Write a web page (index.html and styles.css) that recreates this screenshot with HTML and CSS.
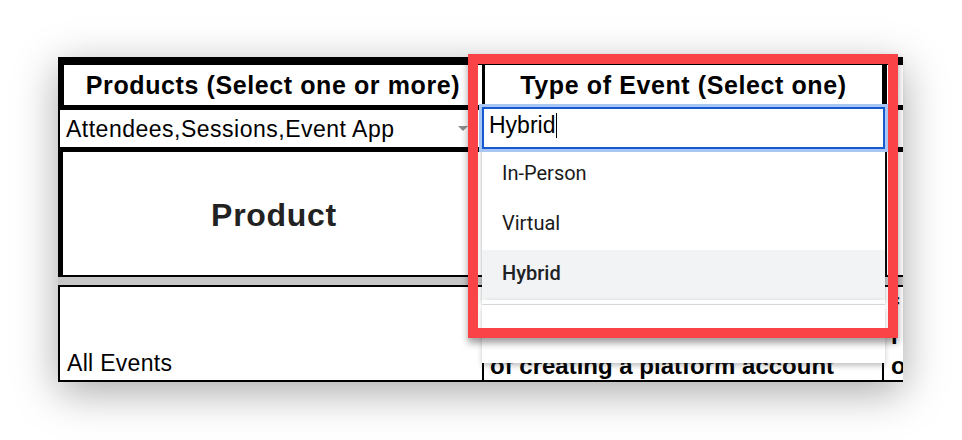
FILE: index.html
```html
<!DOCTYPE html>
<html lang="en">
<head>
<meta charset="utf-8">
<title>Sheet dropdown</title>
<link rel="stylesheet" href="styles.css">
</head>
<body>
<div class="stage">
  <div class="sheet">
    <div class="row row-head">
      <div class="cell c1 head">Products (Select one or more)</div>
      <div class="cell c2 head">Type of Event (Select one)</div>
      <div class="cell c3"></div>
    </div>
    <div class="row row-select">
      <div class="cell c1 select-cell">
        <span class="select-text">Attendees,Sessions,Event App</span>
        <span class="arrow"></span>
      </div>
      <div class="cell c2"></div>
      <div class="cell c3"></div>
    </div>
    <div class="row row-title">
      <div class="cell c1 title">Product</div>
      <div class="cell c2"></div>
      <div class="cell c3"></div>
    </div>
    <div class="freeze-bar"></div>
    <div class="row row-body">
      <div class="cell c1 body-cell">All Events</div>
      <div class="cell c2 body-cell bold">Allow attendees the option<br>of creating a platform account</div>
      <div class="cell c3 body-cell bold">f<br>i<br>o</div>
    </div>
  </div>

  <div class="dropdown">
    <div class="dd-input"><span class="dd-value">Hybrid</span><span class="caret"></span></div>
    <ul class="dd-list">
      <li class="dd-item">In-Person</li>
      <li class="dd-item">Virtual</li>
      <li class="dd-item active">Hybrid</li>
    </ul>
    <div class="dd-sep"></div>
    <div class="dd-rest"></div>
  </div>

  <div class="highlight"></div>
</div>
</body>
</html>
```
FILE: styles.css
```css
html, body {
  margin: 0;
  padding: 0;
  background: #ffffff;
}

body {
  font-family: "Liberation Sans", Arial, sans-serif;
  color: #000;
  width: 962px;
  height: 440px;
  overflow: hidden;
}

.stage {
  position: relative;
  width: 962px;
  height: 440px;
  padding-top: 57px;
  box-sizing: border-box;
}

.sheet {
  margin-left: 58px;
  width: 845px;
  background: #fff;
  overflow: hidden;
  box-shadow: 0 10px 40px rgba(0, 0, 0, 0.34);
}

.row {
  display: grid;
  grid-template-columns: 424px 400px 21px;
}

.cell {
  box-sizing: border-box;
  border-left: 2px solid #000;
  overflow: hidden;
  white-space: nowrap;
}

/* header row */
.row-head {
  height: 53px;
  border-top: 8px solid #000;
  border-bottom: 5px solid #000;
  box-sizing: border-box;
}
.row-head .c1 { border-left-width: 6px; }
.row-head .c2 { border-left-width: 3px; }
.row-head .c3 { border-left-width: 5px; }

.head {
  display: flex;
  align-items: center;
  justify-content: center;
  font-weight: bold;
  font-size: 25px;
  letter-spacing: 0.6px;
  padding-top: 1px;
}

/* select row */
.row-select {
  height: 42px;
  border-bottom: 5px solid #000;
  box-sizing: border-box;
}
.row-select .c2 { border-left-width: 3px; }
.row-select .c3 { border-left-width: 5px; }

.select-cell {
  display: flex;
  align-items: center;
  padding-left: 6px;
  padding-right: 14px;
}
.select-text {
  flex: 1;
  font-size: 23px;
  letter-spacing: 0.5px;
  padding-top: 2px;
}
.arrow {
  width: 0;
  height: 0;
  border-left: 5px solid transparent;
  border-right: 5px solid transparent;
  border-top: 5px solid #8c8c8c;
}

/* title row */
.row-title {
  height: 125px;
  border-bottom: 2px solid #000;
  box-sizing: border-box;
}
.row-title .c1 { border-left-width: 5px; }
.row-title .c2 { border-left-width: 3px; }
.row-title .c3 { border-left-width: 5px; }

.title {
  display: flex;
  align-items: center;
  justify-content: center;
  font-weight: bold;
  font-size: 32px;
  letter-spacing: 0.7px;
  color: #222;
  padding-top: 4px;
  padding-left: 3px;
}

.freeze-bar {
  height: 8px;
  background: #c6c6c6;
}

/* body row */
.row-body {
  height: 97px;
  border-top: 2px solid #000;
  border-bottom: 2px solid #000;
  box-sizing: border-box;
}

.body-cell {
  display: flex;
  flex-direction: column;
  justify-content: flex-end;
  font-size: 23px;
  line-height: 30px;
  letter-spacing: 0.3px;
  padding-left: 7px;
  padding-bottom: 2px;
}
.body-cell.bold {
  font-weight: bold;
  font-size: 24px;
  letter-spacing: 0;
  line-height: 29.5px;
  padding-left: 6px;
  padding-bottom: 0;
}
.row-body .c3 { padding-left: 7px; }

/* dropdown overlay */
.dropdown {
  position: absolute;
  left: 482px;
  top: 107px;
  width: 403px;
}

.dd-input {
  box-sizing: border-box;
  height: 42px;
  border: 2px solid #1558d0;
  box-shadow: 0 0 0 3px #a8c6f4;
  background: #fff;
  padding: 3px 0 0 5px;
  display: flex;
  align-items: flex-start;
  font-size: 23px;
  line-height: 26px;
  position: relative;
  z-index: 2;
}
.caret {
  display: inline-block;
  width: 1px;
  height: 25px;
  background: #000;
  margin-left: 1px;
  margin-top: 1px;
}

.dd-list {
  list-style: none;
  margin: 0;
  padding: 1px 0 0 0;
  background: #fff;
  box-shadow: 0 2px 6px 2px rgba(60, 64, 67, 0.15), 0 1px 2px rgba(60, 64, 67, 0.3);
}

.dd-item {
  height: 50px;
  line-height: 46px;
  padding-left: 20px;
  font-family: Roboto, "Liberation Sans", Arial, sans-serif;
  font-size: 20px;
  color: #1a1a1a;
}
.dd-item.active {
  background: #f1f3f4;
  font-weight: 500;
  color: #202124;
}

.dd-sep {
  height: 4px;
  border-bottom: 1px solid #dadce0;
  background: #fff;
  box-shadow: 2px 0 4px -2px rgba(60, 64, 67, 0.3), -2px 0 4px -2px rgba(60, 64, 67, 0.3);
}
.dd-rest {
  height: 58px;
  background: #fff;
  box-shadow: 0 3px 5px rgba(60, 64, 67, 0.3);
}

/* annotation box */
.highlight {
  position: absolute;
  left: 468px;
  top: 54px;
  width: 430px;
  height: 284px;
  box-sizing: border-box;
  border: 10px solid #f94346;
  box-shadow: 0 5px 7px rgba(0, 0, 0, 0.38);
  z-index: 5;
}
```
